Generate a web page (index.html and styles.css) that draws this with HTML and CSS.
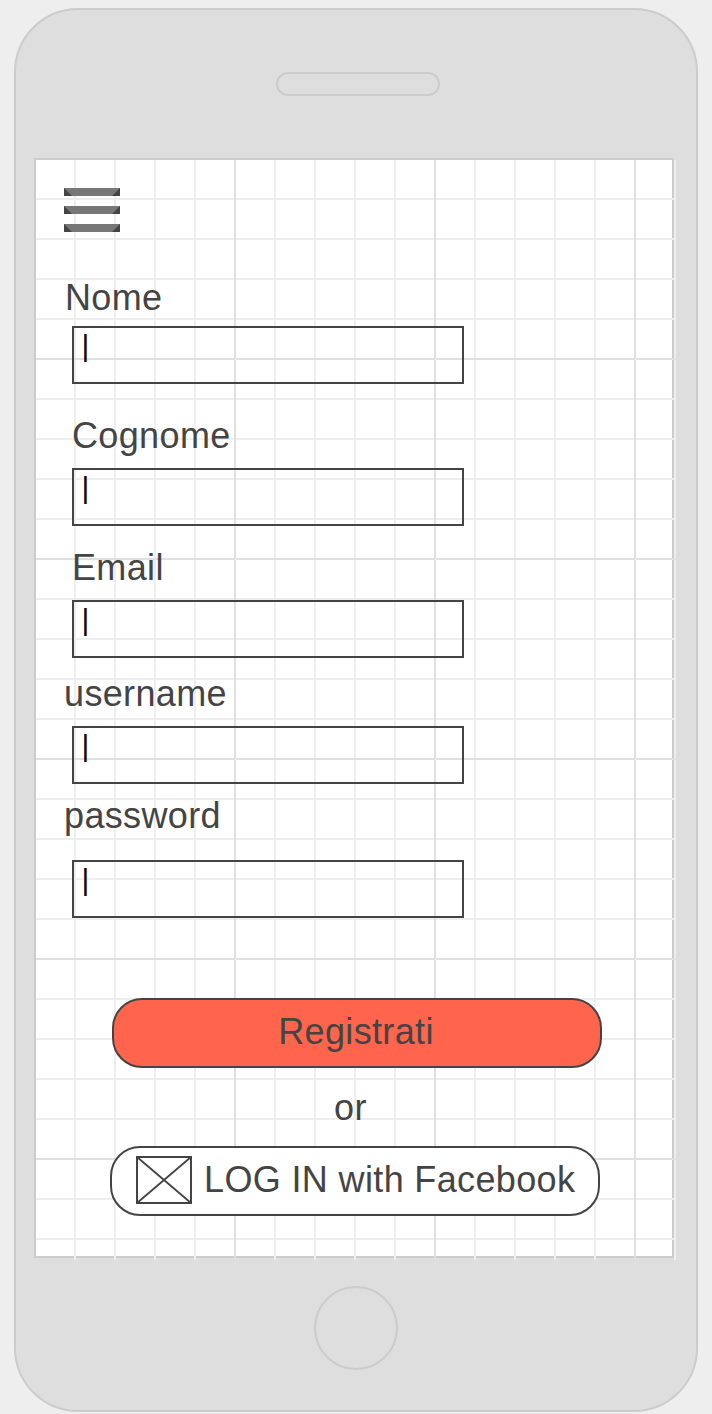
FILE: index.html
```html
<!DOCTYPE html>
<html lang="it">
<head>
<meta charset="utf-8">
<title>Registrazione</title>
<link rel="stylesheet" href="styles.css">
</head>
<body>
<main class="phone">
  <div class="speaker"></div>
  <div class="screen">
    <div class="grid"></div>
    <div class="menu">
      <svg class="menu-bar" viewBox="0 0 56 8"><path fill="#777" d="M0 0h56v8H0z"/><path fill="#444" d="M0 0l8 8H0zM56 0v8h-8z"/></svg>
      <svg class="menu-bar" viewBox="0 0 56 8"><path fill="#777" d="M0 0h56v8H0z"/><path fill="#444" d="M0 0l8 8H0zM56 0v8h-8z"/></svg>
      <svg class="menu-bar" viewBox="0 0 56 8"><path fill="#777" d="M0 0h56v8H0z"/><path fill="#444" d="M0 0l8 8H0zM56 0v8h-8z"/></svg>
    </div>
    <form class="form">
      <div class="field field-nome"><div class="label label-first">Nome</div><div class="input">|</div></div>
      <div class="field field-cognome"><div class="label label-inset">Cognome</div><div class="input">|</div></div>
      <div class="field field-email"><div class="label label-inset">Email</div><div class="input">|</div></div>
      <div class="field field-username"><div class="label">username</div><div class="input">|</div></div>
      <div class="field field-password"><div class="label">password</div><div class="input">|</div></div>
    </form>
    <div class="actions">
      <div class="button button-primary">Registrati</div>
      <div class="or">or</div>
      <div class="button button-facebook">
        <svg class="placeholder" viewBox="0 0 56 48" fill="none" stroke="#444"><path stroke-width="2" d="M1 1h54v46H1z"/><path stroke-width="1.8" d="M1 1l54 46M55 1L1 47"/></svg>
        <span>LOG IN with Facebook</span>
      </div>
    </div>
  </div>
  <div class="home"></div>
</main>
</body>
</html>
```
FILE: styles.css
```css
* { box-sizing: border-box; }

body {
  margin: 0;
  padding: 8px 14px 2px;
  background: #eee;
  color: #444;
  font: 36px/40px "Liberation Sans", Arial, sans-serif;
  letter-spacing: 0.36px;
}

.phone {
  width: 684px;
  height: 1404px;
  padding: 62px 18px 0;
  border: 2px solid #ccc;
  border-radius: 64px;
  background: #dedede;
}

.speaker {
  width: 164px;
  height: 24px;
  margin-left: 242px;
  border: 2px solid #ccc;
  border-radius: 12px;
}

.screen {
  position: relative;
  width: 640px;
  height: 1100px;
  margin-top: 62px;
  border: 2px solid #ccc;
  background: #fff;
  padding-top: 28px;
}

/* Graph paper: 40px cells, heavier line every 200px; spills over the frame by one line. */
.grid {
  position: absolute;
  top: 0;
  left: 0;
  width: 640px;
  height: 1100px;
  background:
    linear-gradient(#fff, #fff) 199px 199px / 1px 1px no-repeat,
    linear-gradient(#fff, #fff) 399px 199px / 1px 1px no-repeat,
    linear-gradient(#fff, #fff) 599px 199px / 1px 1px no-repeat,
    linear-gradient(#fff, #fff) 199px 399px / 1px 1px no-repeat,
    linear-gradient(#fff, #fff) 399px 399px / 1px 1px no-repeat,
    linear-gradient(#fff, #fff) 599px 399px / 1px 1px no-repeat,
    linear-gradient(#fff, #fff) 199px 599px / 1px 1px no-repeat,
    linear-gradient(#fff, #fff) 399px 599px / 1px 1px no-repeat,
    linear-gradient(#fff, #fff) 599px 599px / 1px 1px no-repeat,
    linear-gradient(#fff, #fff) 199px 799px / 1px 1px no-repeat,
    linear-gradient(#fff, #fff) 399px 799px / 1px 1px no-repeat,
    linear-gradient(#fff, #fff) 599px 799px / 1px 1px no-repeat,
    linear-gradient(transparent 198px, #e0e0e0 198px) 0 0 / 200px 200px,
    linear-gradient(90deg, transparent 198px, #e0e0e0 198px) 0 0 / 200px 200px,
    linear-gradient(transparent 38px, #eee 38px) 0 0 / 40px 40px,
    linear-gradient(90deg, transparent 38px, #eee 38px) 0 0 / 40px 40px;
}

.menu, .form, .actions { position: relative; }

.menu {
  display: flex;
  flex-direction: column;
  gap: 10px;
  width: 56px;
  margin-left: 28px;
}

.menu-bar { display: block; width: 56px; height: 8px; }

.form { padding: 46px 0 0 28px; }

.field {
  display: flex;
  flex-direction: column;
}

.field-nome { gap: 8px; margin-bottom: 32px; }
.field-cognome { gap: 12px; margin-bottom: 22px; }
.field-email { gap: 12px; margin-bottom: 16px; }
.field-username { gap: 12px; margin-bottom: 12px; }
.field-password { gap: 24px; }

.label { height: 40px; }
.label-first { padding-left: 1px; }
.label-inset { padding-left: 8px; }

.input {
  width: 392px;
  height: 58px;
  margin-left: 8px;
  padding: 1px 7.5px;
  border: 2px solid #444;
  color: #000;
  font-size: 30px;
  line-height: 34px;
}

.actions { padding: 80px 0 0 74px; }

.button {
  display: flex;
  align-items: center;
  width: 490px;
  height: 70px;
  border: 2px solid #444;
  border-radius: 30px;
}

.button-primary {
  justify-content: center;
  margin-left: 2px;
  padding: 0 2px 2px 0;
  background: #fe654c;
}

.or {
  height: 40px;
  margin: 20px 0 18px;
  padding-left: 224px;
}

.button-facebook {
  gap: 12px;
  padding: 0 0 2px 24px;
  background: #fff;
}

.placeholder { width: 56px; height: 48px; flex: none; }

.home {
  width: 84px;
  height: 84px;
  margin: 28px 0 0 280px;
  border: 2px solid #ccc;
  border-radius: 50%;
}
```
